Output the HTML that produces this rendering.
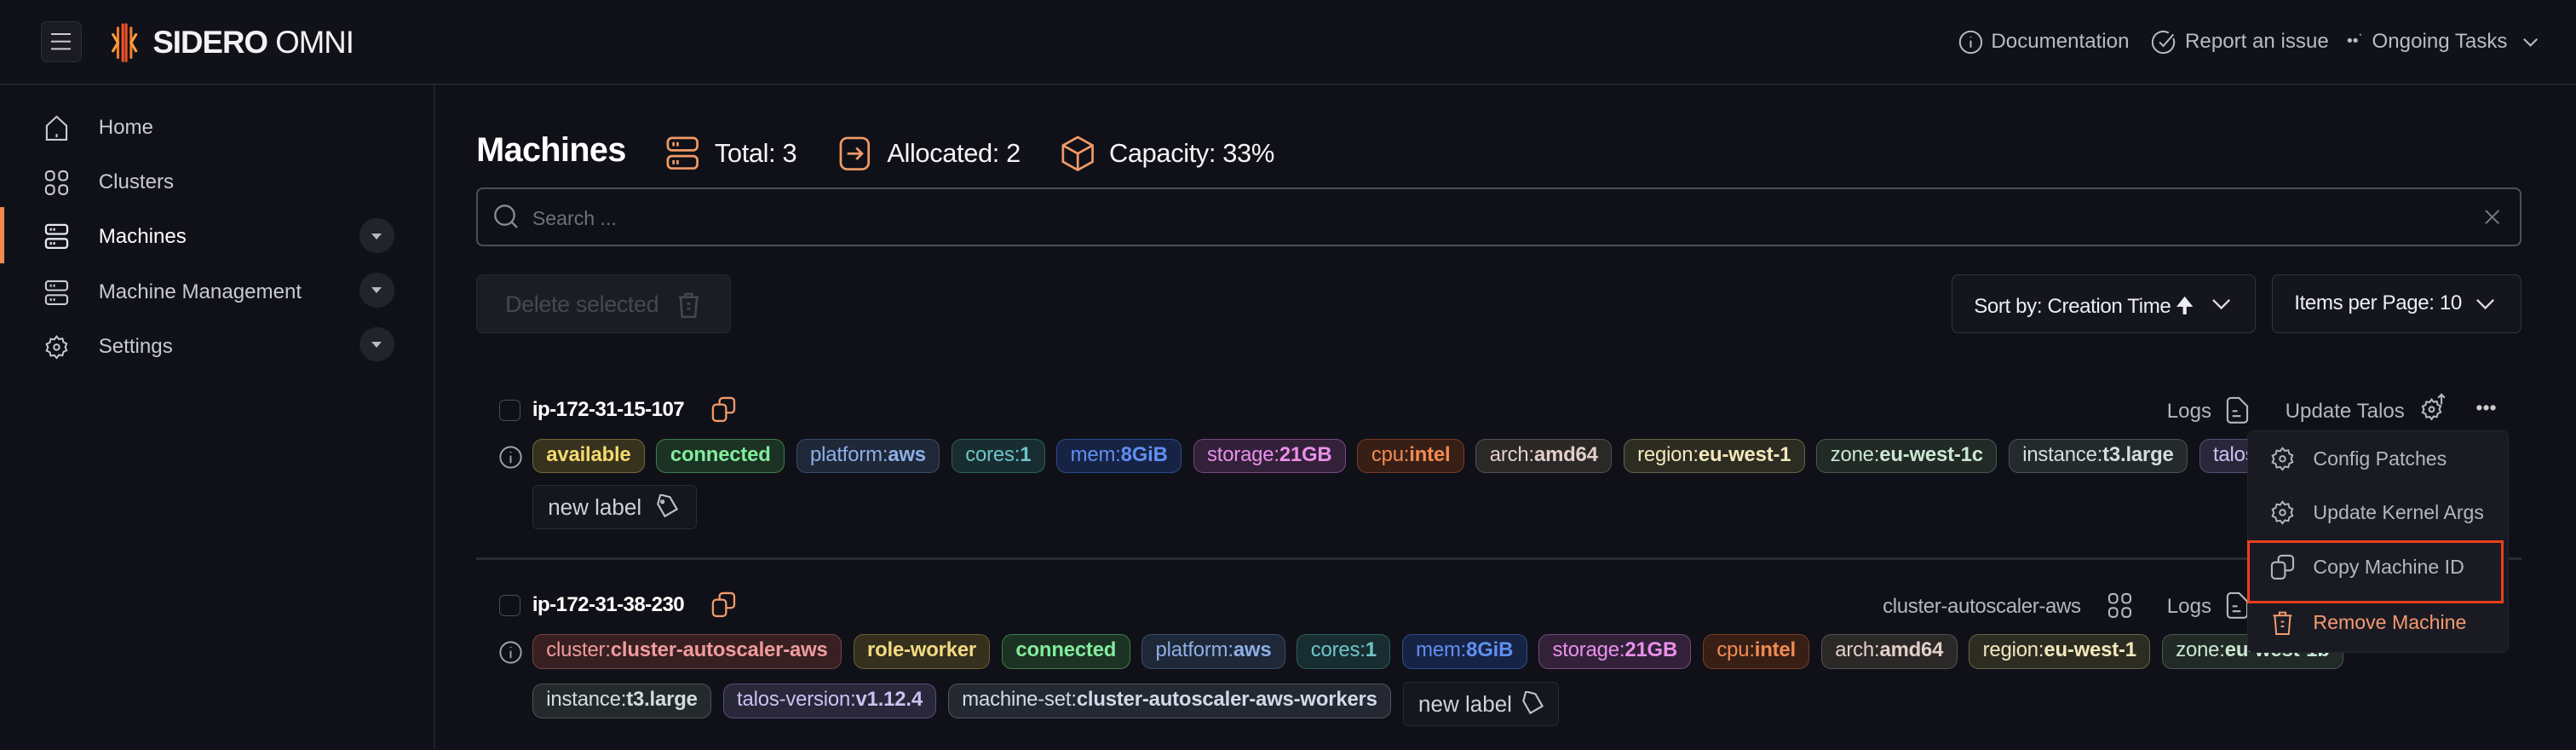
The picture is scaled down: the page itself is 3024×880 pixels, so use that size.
<!DOCTYPE html>
<html><head><meta charset="utf-8">
<style>
*{box-sizing:border-box;margin:0;padding:0}
html,body{width:3024px;height:880px;overflow:hidden;background:#101118}
#z{zoom:1.92857;width:1568px;height:456px;position:relative;font-family:"Liberation Sans",sans-serif;color:#d8d9de;background:#101118}
.a{position:absolute}
svg{display:block}
.hdr{left:0;top:0;width:1568px;height:52px;border-bottom:1.5px solid #24262e;background:#111219}
.side{left:0;top:52px;width:265px;height:404px;border-right:1.5px solid #202229}
.nav{left:27px;font-size:12.5px;color:#c9cad0;display:flex;align-items:center;gap:18px;height:20px}
.chev{left:219px;width:21px;height:21px;border-radius:50%;background:#22242c}
.chev:after{content:"";position:absolute;left:7px;top:9px;border-left:3.5px solid transparent;border-right:3.5px solid transparent;border-top:4px solid #b8bac2}
.tags{display:flex;gap:7px;white-space:nowrap}
.t{height:21px;border:1px solid;border-radius:6px;padding:0 8px;font-size:12.4px;line-height:19px;letter-spacing:-0.1px}
.t b{font-weight:bold}
.mi{left:1382px;display:flex;align-items:center;gap:11px;font-size:12px;color:#b4b6be}
</style></head><body><div id="z">
<div class="a hdr"></div>
<div class="a" style="left:25px;top:13px;width:25px;height:25px;border:1px solid #2c2e36;border-radius:4px;background:#1b1c23"></div>
<div class="a" style="left:31px;top:20px;width:12px;height:1.3px;background:#ccc;box-shadow:0 4.5px 0 #ccc,0 9px 0 #ccc"></div>
<svg class="a" style="left:64px;top:14px" width="24" height="24" viewBox="0 0 24 24" fill="none" stroke-width="1.6" stroke-linecap="round"><path d="M11 1v22M13 1v22" stroke="#f0542a"/><path d="M8 3v18M16 3v18" stroke="#f77b2a"/><path d="M5 7l3 5-3 5M19 7l-3 5 3 5" stroke="#f9a23a"/></svg>
<div class="a" style="left:93px;top:15px;font-size:19px;color:#f2f2f4;letter-spacing:-0.5px"><b>SIDERO</b> OMNI</div>
<div class="a" style="left:1192px;top:18px;display:flex;align-items:center;font-size:12.5px;color:#b9bbc2;gap:5px">
<svg width="15" height="15" viewBox="0 0 16 16" fill="none" stroke="#b9bbc2" stroke-width="1.1"><circle cx="8" cy="8" r="7"/><path d="M8 7v4.5M8 4.5v.5"/></svg>Documentation
<svg style="margin-left:9px" width="15" height="15" viewBox="0 0 16 16" fill="none" stroke="#b9bbc2" stroke-width="1.1"><path d="M14 5.5A7 7 0 1 1 11 2"/><path d="M5 8l2.5 2.5L14 3"/></svg>Report an issue
<span style="margin-left:6px;font-size:10px;letter-spacing:0">••˙</span> Ongoing Tasks
<svg style="margin-left:3px" width="12" height="12" viewBox="0 0 12 12" fill="none" stroke="#b9bbc2" stroke-width="1.1"><path d="M2 4l4 4 4-4"/></svg></div>

<div class="a side"></div>
<div class="a" style="left:0;top:126px;width:2.5px;height:34px;background:#f08a50"></div>
<div class="a nav" style="top:68px"><svg width="15" height="17" viewBox="0 0 15 17" fill="none" stroke="#c9cad0" stroke-width="1.1"><path d="M1.5 7L7.5 1.5 13.5 7v8.5h-12z"/><path d="M7.5 12v2"/></svg>Home</div>
<div class="a nav" style="top:101px"><svg width="15" height="17" viewBox="0 0 15 17" fill="none" stroke="#c9cad0" stroke-width="1.1"><rect x="1" y="1.5" width="5" height="5.5" rx="2"/><rect x="9" y="1.5" width="5" height="5.5" rx="2"/><rect x="1" y="10" width="5" height="5.5" rx="2"/><rect x="9" y="10" width="5" height="5.5" rx="2"/></svg>Clusters</div>
<div class="a nav" style="top:134px;color:#fff"><svg width="15" height="17" viewBox="0 0 15 17" fill="none" stroke="#e8e9ee" stroke-width="1.2"><rect x="1" y="1.5" width="13" height="5.5" rx="1.5"/><rect x="1" y="10" width="13" height="5.5" rx="1.5"/><path d="M4 3.5v1.5M6 3.5v1.5M4 12v1.5M6 12v1.5"/></svg>Machines</div>
<div class="a chev" style="top:133px"></div>
<div class="a nav" style="top:168px"><svg width="15" height="17" viewBox="0 0 15 17" fill="none" stroke="#c9cad0" stroke-width="1.1"><rect x="1" y="1.5" width="13" height="5.5" rx="1.5"/><rect x="1" y="10" width="13" height="5.5" rx="1.5"/><path d="M4 3.5v1.5M6 3.5v1.5M4 12v1.5M6 12v1.5"/></svg>Machine Management</div>
<div class="a chev" style="top:166px"></div>
<div class="a nav" style="top:201px"><svg width="15" height="17" viewBox="0 0 16 16" fill="none" stroke="#c9cad0" stroke-width="1.1"><path d="M8 1l1.5 1.8 2.3-.4.6 2.3 2.1 1-.9 2.2.9 2.2-2.1 1-.6 2.3-2.3-.4L8 15l-1.5-1.8-2.3.4-.6-2.3-2.1-1 .9-2.2-.9-2.2 2.1-1 .6-2.3 2.3.4z"/><circle cx="8" cy="8" r="1.8"/></svg>Settings</div>
<div class="a chev" style="top:199px"></div>

<div class="a" style="left:290px;top:80px;font-size:20.5px;font-weight:bold;color:#fff;letter-spacing:-0.3px">Machines</div>
<div class="a" style="left:405px;top:82px;display:flex;align-items:center;font-size:16px;color:#f4f4f6;letter-spacing:-0.2px">
<svg width="21" height="22" viewBox="0 0 21 22" fill="none" stroke="#f19a66" stroke-width="1.4"><rect x="1.5" y="1.5" width="18" height="7.5" rx="2.5"/><rect x="1.5" y="12.5" width="18" height="7.5" rx="2.5"/><path d="M5 4v2.5M7.5 4v2.5M5 15v2.5M7.5 15v2.5"/></svg><span style="margin-left:9px">Total: 3</span>
<svg style="margin-left:26px" width="19" height="21" viewBox="0 0 19 21" fill="none" stroke="#f19a66" stroke-width="1.4"><rect x="1" y="1" width="17" height="19" rx="4"/><path d="M5 10.5h9M10.5 7l3.5 3.5-3.5 3.5"/></svg><span style="margin-left:10px">Allocated: 2</span>
<svg style="margin-left:24px" width="22" height="23" viewBox="0 0 22 23" fill="none" stroke="#f19a66" stroke-width="1.4"><path d="M11 1.5l9 5v10l-9 5-9-5v-10z"/><path d="M2 6.5l9 5 9-5M11 11.5v10"/></svg><span style="margin-left:8px">Capacity: 33%</span></div>

<div class="a" style="left:290px;top:114px;width:1245px;height:36px;border:1.3px solid #4d4f57;border-radius:4px"></div>
<svg class="a" style="left:300px;top:124px" width="16" height="16" viewBox="0 0 16 16" fill="none" stroke="#8a8c94" stroke-width="1.2"><circle cx="7" cy="7" r="5.8"/><path d="M11.2 11.2l3.3 3.3"/></svg>
<div class="a" style="left:324px;top:126px;font-size:12px;color:#6e7078">Search ...</div>
<svg class="a" style="left:1512px;top:127px" width="10" height="10" viewBox="0 0 10 10" stroke="#7a7c84" stroke-width="1"><path d="M1 1l8 8M9 1l-8 8"/></svg>

<div class="a" style="left:290px;top:167px;width:155px;height:36px;border:1px solid #262831;border-radius:4px;background:#1b1d25;color:#454852;font-size:14px;padding:10px 0 0 17px;letter-spacing:-0.2px">Delete selected</div>
<svg class="a" style="left:412px;top:177px" width="14" height="17" viewBox="0 0 14 17" fill="none" stroke="#454852" stroke-width="1.3"><path d="M2 4h10l-1 12H3zM1 4h12M5 4V2h4v2M6 8h2M6 11h2"/></svg>

<div class="a" style="left:1188px;top:167px;width:185px;height:36px;border:1px solid #33353d;border-radius:4px;background:#15161d;font-size:12.5px;color:#eceef2;padding:10px 0 0 13px;letter-spacing:-0.2px">Sort by: Creation Time <b>🠉</b></div>
<svg class="a" style="left:1346px;top:180px" width="12" height="10" viewBox="0 0 12 10" fill="none" stroke="#ddd" stroke-width="1.2"><path d="M1 2.5l5 5 5-5"/></svg>
<div class="a" style="left:1383px;top:167px;width:152px;height:36px;border:1px solid #33353d;border-radius:4px;background:#15161d;font-size:12.5px;color:#eceef2;padding:10px 0 0 13px;letter-spacing:-0.2px">Items per Page: 10</div>
<svg class="a" style="left:1507px;top:180px" width="12" height="10" viewBox="0 0 12 10" fill="none" stroke="#ddd" stroke-width="1.2"><path d="M1 2.5l5 5 5-5"/></svg>

<!-- row 1 -->
<div class="a" style="left:304px;top:243px;width:13px;height:13px;border:1px solid #4a4c54;border-radius:3px"></div>
<div class="a" style="left:324px;top:242px;font-size:12.5px;font-weight:bold;color:#fff;letter-spacing:-0.3px">ip-172-31-15-107</div>
<svg class="a" style="left:433px;top:241px" width="15" height="16" viewBox="0 0 15 16" fill="none" stroke="#f19a66" stroke-width="1.2"><rect x="1" y="5" width="8" height="10" rx="2"/><path d="M5 5V3a2 2 0 0 1 2-2h5a2 2 0 0 1 2 2v5a2 2 0 0 1-2 2H9"/></svg>
<svg class="a" style="left:304px;top:271px" width="14" height="14" viewBox="0 0 14 14" fill="none" stroke="#a0a2aa" stroke-width="1"><circle cx="7" cy="7" r="6.3"/><path d="M7 6v4.5M7 3.6v.6"/></svg>
<div class="a tags" style="left:324px;top:267px">
<div class="t" style="background:#37321e;border-color:#73653a;color:#f4da6e"><b>available</b></div>
<div class="t" style="background:#1c3224;border-color:#3f7c4f;color:#83ec9d"><b>connected</b></div>
<div class="t" style="background:#1e2838;border-color:#3b4d6b;color:#8eaee6">platform:<b>aws</b></div>
<div class="t" style="background:#182d30;border-color:#2e5c5f;color:#6ec4c9">cores:<b>1</b></div>
<div class="t" style="background:#172344;border-color:#2d4c8c;color:#5f8ff2">mem:<b>8GiB</b></div>
<div class="t" style="background:#33213a;border-color:#774a7e;color:#ea90ea">storage:<b>21GB</b></div>
<div class="t" style="background:#381f16;border-color:#773d25;color:#f28b52">cpu:<b>intel</b></div>
<div class="t" style="background:#2b2828;border-color:#585050;color:#e2cfc8">arch:<b>amd64</b></div>
<div class="t" style="background:#2d2c22;border-color:#676347;color:#f2e8bc">region:<b>eu-west-1</b></div>
<div class="t" style="background:#212a26;border-color:#49584f;color:#cbe8d3">zone:<b>eu-west-1c</b></div>
<div class="t" style="background:#242a2c;border-color:#4a5357;color:#d2dde0">instance:<b>t3.large</b></div>
<div class="t" style="background:#29273a;border-color:#55507a;color:#cac2f2">talos-version:<b>v1.12.4</b></div>
</div>
<div class="a" style="left:324px;top:295px;width:100px;height:27px;border:1px solid #2a2c34;border-radius:3px;background:#16171e;font-size:13.5px;color:#d0d2d8;padding:5px 0 0 9px">new label</div>
<svg class="a" style="left:399px;top:301px" width="15" height="15" viewBox="0 0 15 15" fill="none" stroke="#c0c2c8" stroke-width="1.1"><path d="M1.5 1.5h6l6 6-6 6-6-6z" transform="rotate(15 7.5 7.5)"/><circle cx="4.5" cy="4.5" r=".8"/></svg>

<div class="a" style="left:1319px;top:243px;font-size:12.5px;color:#b4b6be">Logs</div>
<svg class="a" style="left:1355px;top:241px" width="14" height="17" viewBox="0 0 14 17" fill="none" stroke="#b4b6be" stroke-width="1.1"><path d="M1 3a2 2 0 0 1 2-2h5l5 5v8a2 2 0 0 1-2 2H3a2 2 0 0 1-2-2z"/><path d="M4 9h3M4 12h5"/></svg>
<div class="a" style="left:1391px;top:243px;font-size:12.5px;color:#b4b6be">Update Talos</div>
<svg class="a" style="left:1473px;top:239px" width="16" height="18" viewBox="0 0 16 18" fill="none" stroke="#b4b6be" stroke-width="1.1"><path d="M7 4l1.2 1.5 2-.3.5 2 1.8.8-.8 1.9.8 1.9-1.8.8-.5 2-2-.3L7 16l-1.2-1.5-2 .3-.5-2-1.8-.8.8-1.9-.8-1.9 1.8-.8.5-2 2 .3z"/><circle cx="7" cy="10" r="1.5"/><path d="M13 7V1M11 3l2-2 2 2"/></svg>
<div class="a" style="left:1507px;top:241px;font-size:12px;color:#ccc;letter-spacing:0">•••</div>

<div class="a" style="left:290px;top:339px;width:1245px;height:1.5px;background:#2a2c33"></div>

<!-- row 2 -->
<div class="a" style="left:304px;top:362px;width:13px;height:13px;border:1px solid #4a4c54;border-radius:3px"></div>
<div class="a" style="left:324px;top:361px;font-size:12.5px;font-weight:bold;color:#fff;letter-spacing:-0.3px">ip-172-31-38-230</div>
<svg class="a" style="left:433px;top:360px" width="15" height="16" viewBox="0 0 15 16" fill="none" stroke="#f19a66" stroke-width="1.2"><rect x="1" y="5" width="8" height="10" rx="2"/><path d="M5 5V3a2 2 0 0 1 2-2h5a2 2 0 0 1 2 2v5a2 2 0 0 1-2 2H9"/></svg>
<svg class="a" style="left:304px;top:390px" width="14" height="14" viewBox="0 0 14 14" fill="none" stroke="#a0a2aa" stroke-width="1"><circle cx="7" cy="7" r="6.3"/><path d="M7 6v4.5M7 3.6v.6"/></svg>
<div class="a tags" style="left:324px;top:386px">
<div class="t" style="background:#381f22;border-color:#774447;color:#f09c9c">cluster:<b>cluster-autoscaler-aws</b></div>
<div class="t" style="background:#35301d;border-color:#6a5e33;color:#f3da82"><b>role-worker</b></div>
<div class="t" style="background:#1c3224;border-color:#3f7c4f;color:#83ec9d"><b>connected</b></div>
<div class="t" style="background:#1e2838;border-color:#3b4d6b;color:#8eaee6">platform:<b>aws</b></div>
<div class="t" style="background:#182d30;border-color:#2e5c5f;color:#6ec4c9">cores:<b>1</b></div>
<div class="t" style="background:#172344;border-color:#2d4c8c;color:#5f8ff2">mem:<b>8GiB</b></div>
<div class="t" style="background:#33213a;border-color:#774a7e;color:#ea90ea">storage:<b>21GB</b></div>
<div class="t" style="background:#381f16;border-color:#773d25;color:#f28b52">cpu:<b>intel</b></div>
<div class="t" style="background:#2b2828;border-color:#585050;color:#e2cfc8">arch:<b>amd64</b></div>
<div class="t" style="background:#2d2c22;border-color:#676347;color:#f2e8bc">region:<b>eu-west-1</b></div>
<div class="t" style="background:#212a26;border-color:#49584f;color:#cbe8d3">zone:<b>eu-west-1b</b></div>
</div>
<div class="a tags" style="left:324px;top:416px">
<div class="t" style="background:#242a2c;border-color:#4a5357;color:#d2dde0">instance:<b>t3.large</b></div>
<div class="t" style="background:#29273a;border-color:#55507a;color:#cac2f2">talos-version:<b>v1.12.4</b></div>
<div class="t" style="background:#242831;border-color:#4f5563;color:#d2d9e8">machine-set:<b>cluster-autoscaler-aws-workers</b></div>
<div style="height:27px;margin-top:-1px;border:1px solid #2a2c34;border-radius:3px;background:#16171e;font-size:13.5px;color:#d0d2d8;padding:5px 28px 0 9px;position:relative">new label<svg style="position:absolute;right:8px;top:5px" width="15" height="15" viewBox="0 0 15 15" fill="none" stroke="#c0c2c8" stroke-width="1.1"><path d="M1.5 1.5h6l6 6-6 6-6-6z" transform="rotate(15 7.5 7.5)"/></svg></div>
</div>
<div class="a" style="left:1146px;top:362px;font-size:12.5px;color:#b4b6be;letter-spacing:-0.2px">cluster-autoscaler-aws</div>
<svg class="a" style="left:1283px;top:360px" width="15" height="17" viewBox="0 0 15 17" fill="none" stroke="#b4b6be" stroke-width="1.1"><rect x="1" y="1.5" width="5" height="5.5" rx="2"/><rect x="9" y="1.5" width="5" height="5.5" rx="2"/><rect x="1" y="10" width="5" height="5.5" rx="2"/><rect x="9" y="10" width="5" height="5.5" rx="2"/></svg>
<div class="a" style="left:1319px;top:362px;font-size:12.5px;color:#b4b6be">Logs</div>
<svg class="a" style="left:1355px;top:360px" width="14" height="17" viewBox="0 0 14 17" fill="none" stroke="#b4b6be" stroke-width="1.1"><path d="M1 3a2 2 0 0 1 2-2h5l5 5v8a2 2 0 0 1-2 2H3a2 2 0 0 1-2-2z"/><path d="M4 9h3M4 12h5"/></svg>

<!-- menu -->
<div class="a" style="left:1368px;top:262px;width:159px;height:135px;background:#1a1b22;border:1px solid #24262e;border-radius:4px"></div>
<div class="a mi" style="top:271px"><svg width="15" height="16" viewBox="0 0 16 16" fill="none" stroke="#b4b6be" stroke-width="1.1"><path d="M8 1l1.5 1.8 2.3-.4.6 2.3 2.1 1-.9 2.2.9 2.2-2.1 1-.6 2.3-2.3-.4L8 15l-1.5-1.8-2.3.4-.6-2.3-2.1-1 .9-2.2-.9-2.2 2.1-1 .6-2.3 2.3.4z"/><circle cx="8" cy="8" r="1.8"/></svg>Config Patches</div>
<div class="a mi" style="top:304px"><svg width="15" height="16" viewBox="0 0 16 16" fill="none" stroke="#b4b6be" stroke-width="1.1"><path d="M8 1l1.5 1.8 2.3-.4.6 2.3 2.1 1-.9 2.2.9 2.2-2.1 1-.6 2.3-2.3-.4L8 15l-1.5-1.8-2.3.4-.6-2.3-2.1-1 .9-2.2-.9-2.2 2.1-1 .6-2.3 2.3.4z"/><circle cx="8" cy="8" r="1.8"/></svg>Update Kernel Args</div>
<div class="a mi" style="top:337px"><svg width="15" height="16" viewBox="0 0 15 16" fill="none" stroke="#b4b6be" stroke-width="1.1"><rect x="1" y="5" width="8" height="10" rx="2"/><path d="M5 5V3a2 2 0 0 1 2-2h5a2 2 0 0 1 2 2v5a2 2 0 0 1-2 2H9"/></svg>Copy Machine ID</div>
<div class="a mi" style="top:371px;color:#f59a72"><svg width="15" height="16" viewBox="0 0 14 17" fill="none" stroke="#f59a72" stroke-width="1.1"><path d="M2 4h10l-1 12H3zM1 4h12M5 4V2h4v2M6 8h2M6 11h2"/></svg>Remove Machine</div>
<div class="a" style="left:1368px;top:329px;width:156px;height:38px;border:2px solid #e8401c"></div>
</div></body></html>
